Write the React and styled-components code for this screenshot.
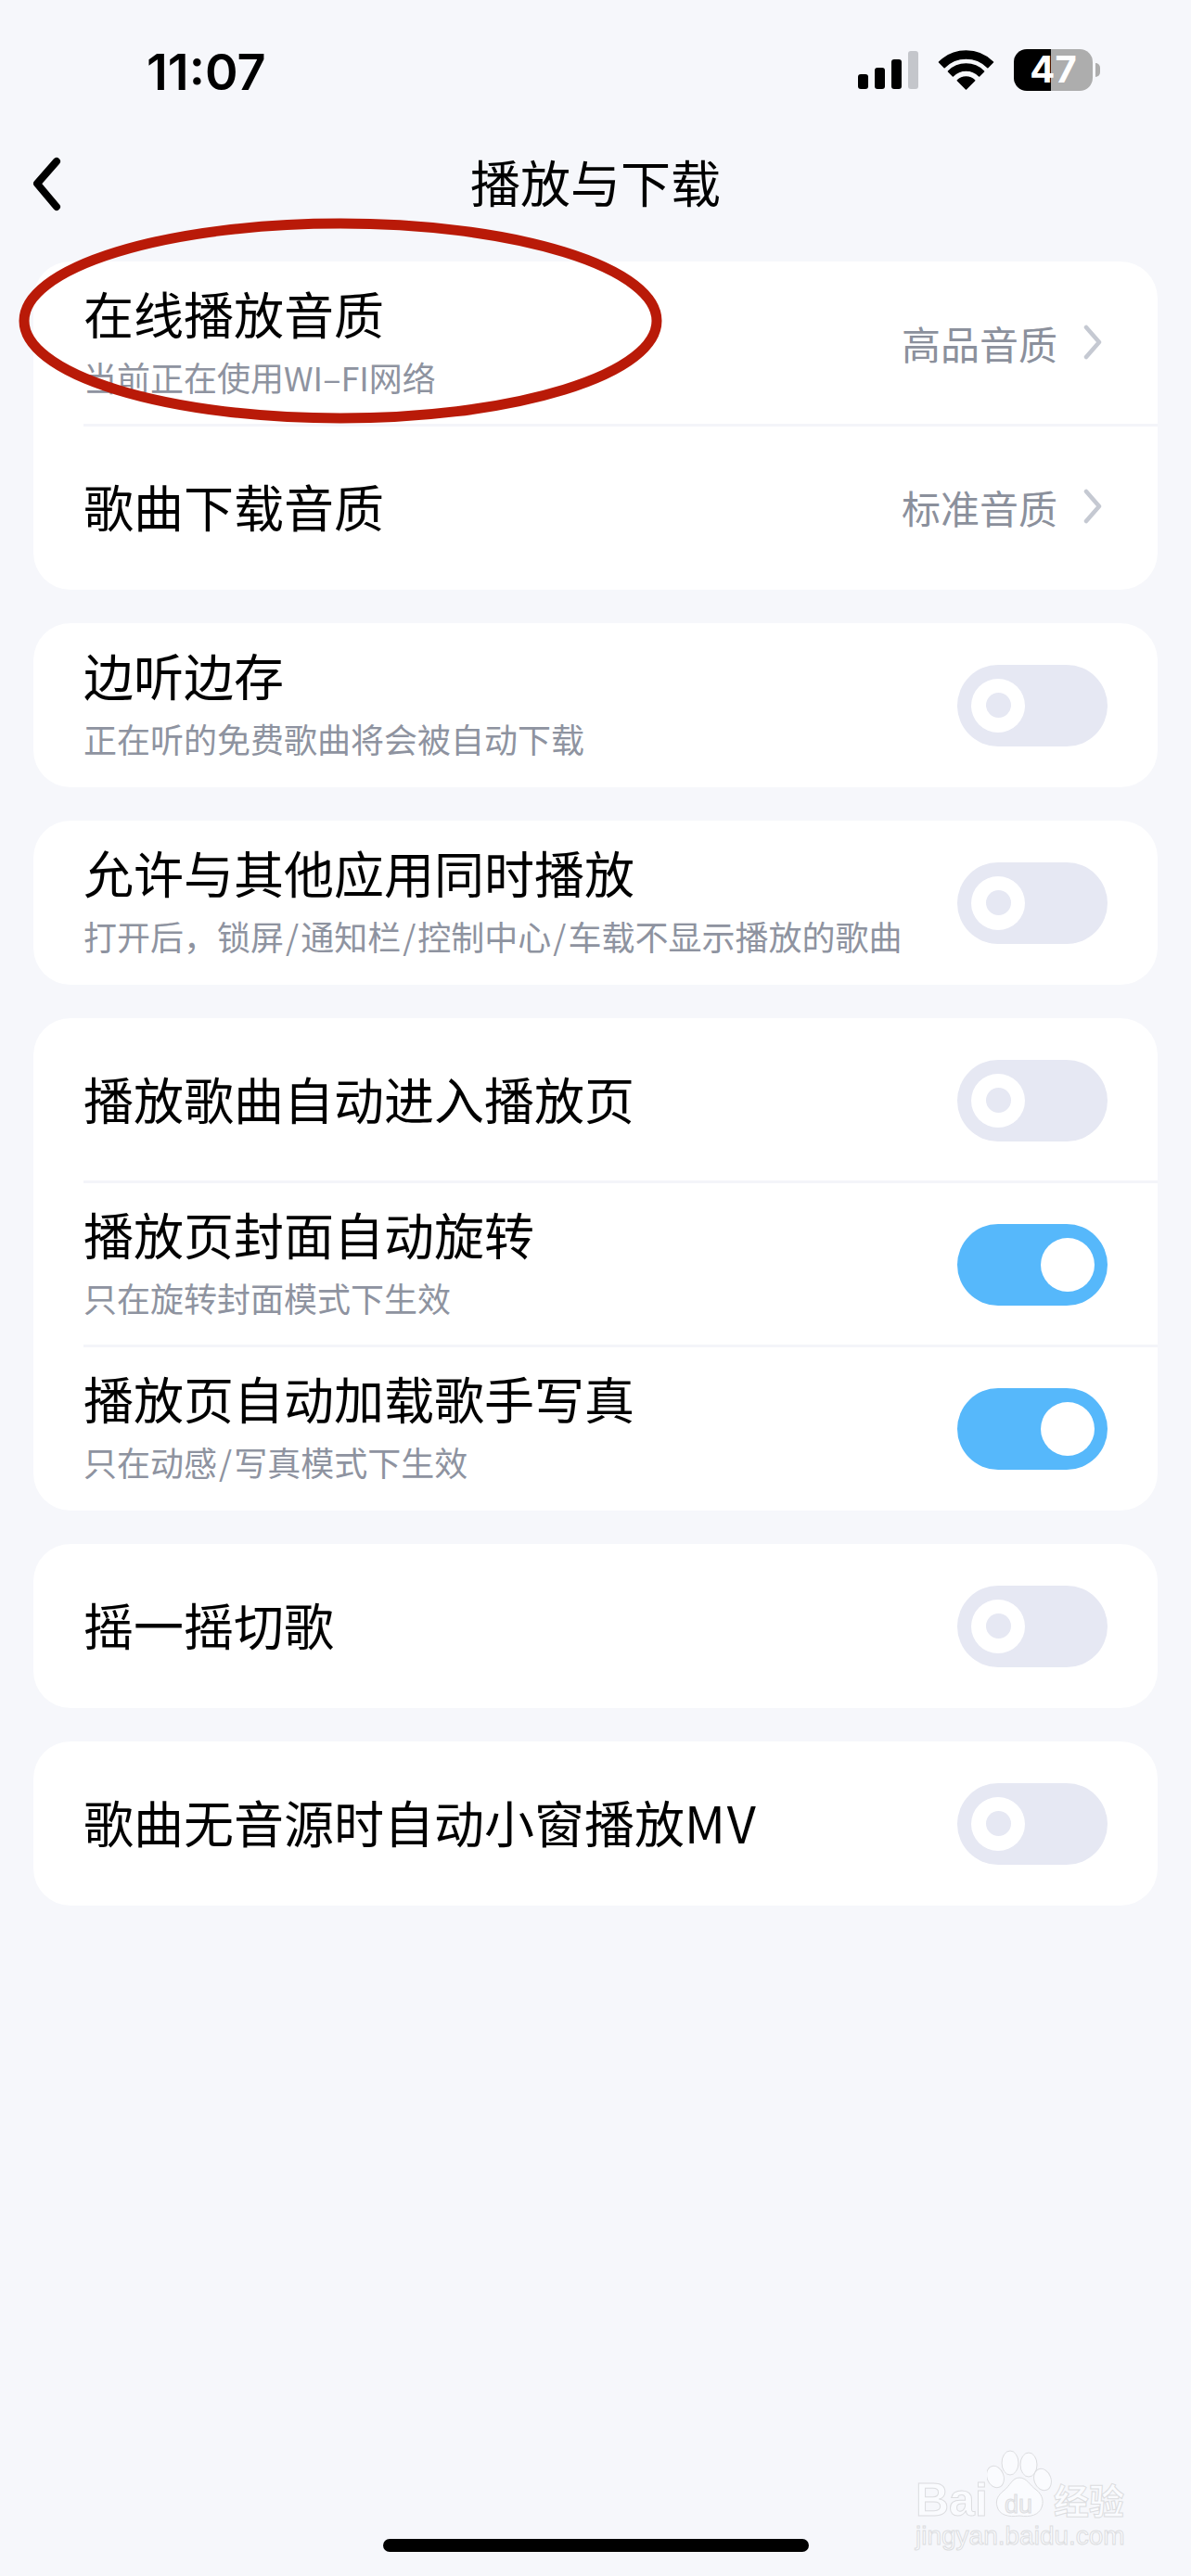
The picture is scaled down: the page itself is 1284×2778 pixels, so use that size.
import React from 'react'
import styled, { createGlobalStyle } from 'styled-components'

const GlobalStyle = createGlobalStyle`
  html, body {
    margin: 0;
    padding: 0;
    background: #f6f7fb;
  }
  body {
    font-family: "Noto Sans CJK SC", "Noto Sans", sans-serif;
  }
`

const Page = styled.div`
  position: relative;
  width: 1284px;
  height: 2778px;
  overflow: hidden;
  background: #f6f7fb;
`

const StatusBar = styled.div`
  display: flex;
  align-items: center;
  justify-content: space-between;
  height: 150px;
  padding: 0 106px 0 158px;
  box-sizing: border-box;
`

const Time = styled.span`
  font-family: Inter, sans-serif;
  font-weight: 600;
  font-size: 54px;
  margin-top: 4px;
  color: #000;
`

const StatusIcons = styled.div`
  display: flex;
  align-items: center;
  gap: 23px;
`

const Battery = styled.div`
  position: relative;
  display: flex;
  align-items: center;
  justify-content: center;
  width: 85px;
  height: 45px;
  border-radius: 14px;
  background: linear-gradient(to right, #000 47%, #adadad 47%);
  color: #fff;
  font-family: Inter, sans-serif;
  font-weight: 700;
  font-size: 40px;
  line-height: 1;
  &::after {
    content: '';
    position: absolute;
    left: 88px;
    top: 15px;
    width: 5px;
    height: 15px;
    border-radius: 0 8px 8px 0;
    background: #adadad;
  }
`

const Header = styled.header`
  position: relative;
  display: flex;
  align-items: center;
  justify-content: center;
  height: 94px;
  margin-bottom: 38px;
`

const BackIcon = styled.svg`
  position: absolute;
  left: 32px;
  top: 19px;
`

const Title = styled.h1`
  margin: -3px 0 0;
  font-size: 54px;
  font-weight: 400;
  color: #000;
`

const List = styled.main`
  display: flex;
  flex-direction: column;
  gap: 36px;
  padding: 0 36px;
`

const Card = styled.section`
  background: #fff;
  border-radius: 40px;
  overflow: hidden;
`

const Row = styled.div`
  position: relative;
  display: flex;
  align-items: center;
  justify-content: space-between;
  height: 177px;
  padding: 0 54px;
  box-sizing: border-box;
  &:not(:last-child)::after {
    content: '';
    position: absolute;
    left: 54px;
    right: 0;
    bottom: -1px;
    height: 3px;
    background: #f4f5f9;
  }
`

const Texts = styled.div`
  display: flex;
  flex-direction: column;
  gap: 13px;
  margin-bottom: 4px;
`

const Label = styled.div`
  font-size: 54px;
  line-height: 66px;
  color: #000;
`

const Latin = styled.span`
  letter-spacing: 2px;
`

const Sub = styled.div`
  margin-bottom: 5px;
  font-size: 36px;
  line-height: 44px;
  color: #8e93a0;
`

const Slash = styled.span`
  margin: 0 2px;
`

const Value = styled.div`
  display: flex;
  align-items: center;
  gap: 28px;
  margin: 0 6px 3px 0;
  font-size: 42px;
  color: #8b909c;
`

const Track = styled.div`
  position: relative;
  width: 162px;
  height: 88px;
  border-radius: 44px;
  background: ${(p) => (p.$on ? '#56b8fb' : '#e6e8f3')};
`

const Knob = styled.div`
  position: absolute;
  top: 15px;
  left: ${(p) => (p.$on ? '90px' : '15px')};
  width: 58px;
  height: 58px;
  border-radius: 50%;
  background: #fff;
  display: flex;
  align-items: center;
  justify-content: center;
  &::after {
    content: '';
    display: ${(p) => (p.$on ? 'none' : 'block')};
    width: 27px;
    height: 27px;
    border-radius: 50%;
    background: #e6e8f3;
  }
`

const Circle = styled.svg`
  position: absolute;
  left: 20px;
  top: 234px;
`

const HomeBar = styled.div`
  position: absolute;
  left: 413px;
  bottom: 26px;
  width: 459px;
  height: 14px;
  border-radius: 7px;
  background: #000;
`

const Watermark = styled.div`
  position: absolute;
  left: 987px;
  top: 2642px;
  width: 240px;
  color: #fafbfe;
  -webkit-text-stroke: 1px #dcdde0;
`

const Brand = styled.div`
  display: flex;
  align-items: flex-end;
  height: 74px;
  white-space: nowrap;
`

const BrandLatin = styled.span`
  flex: none;
  width: 77px;
  font-family: "Liberation Sans", sans-serif;
  font-weight: 700;
  font-size: 50px;
  line-height: 40px;
`

const BrandCjk = styled.span`
  flex: none;
  margin-left: 2px;
  font-family: "Noto Sans CJK SC", sans-serif;
  font-weight: 700;
  font-size: 38px;
  line-height: 42px;
`

const Paw = styled.div`
  position: relative;
  flex: none;
  width: 70px;
  height: 74px;
`

const PawText = styled.span`
  position: absolute;
  left: 19px;
  bottom: 0;
  font-family: "Liberation Sans", sans-serif;
  font-size: 27px;
  line-height: 30px;
  color: #f0f1f5;
`

const Site = styled.div`
  margin-top: 2px;
  font-family: "Liberation Sans", sans-serif;
  font-size: 28px;
  line-height: 34px;
  white-space: nowrap;
`

const band = (rO, rI) => {
  const s = Math.SQRT1_2
  const cx = 28.5
  const cy = 42
  if (!rI) return `M${cx - rO * s} ${cy - rO * s}A${rO} ${rO} 0 0 1 ${cx + rO * s} ${cy - rO * s}L${cx} ${cy}Z`
  return `M${cx - rO * s} ${cy - rO * s}A${rO} ${rO} 0 0 1 ${cx + rO * s} ${cy - rO * s}L${cx + rI * s} ${cy - rI * s}A${rI} ${rI} 0 0 0 ${cx - rI * s} ${cy - rI * s}Z`
}

function Signal() {
  return (
    <svg width="65" height="41" viewBox="0 0 65 41">
      <rect x="0" y="25" width="11" height="16" rx="3" fill="#000" />
      <rect x="18" y="18" width="11" height="23" rx="3" fill="#000" />
      <rect x="36" y="9" width="11" height="32" rx="3" fill="#000" />
      <rect x="54" y="0" width="11" height="41" rx="3" fill="#c4c6cb" />
    </svg>
  )
}

function Wifi() {
  return (
    <svg width="57" height="42" viewBox="0 0 57 42" style={{ overflow: 'visible' }}>
      <g fill="#000" stroke="#000" strokeWidth="1.5" strokeLinejoin="round">
        <path d={band(41, 33)} />
        <path d={band(27, 20)} />
        <path d={band(13)} />
      </g>
    </svg>
  )
}

function Toggle({ on }) {
  return (
    <Track $on={on}>
      <Knob $on={on} />
    </Track>
  )
}

function Item({ label, sub, value, on }) {
  return (
    <Row>
      <Texts>
        <Label>{label}</Label>
        {sub && <Sub>{sub}</Sub>}
      </Texts>
      {value ? (
        <Value>
          {value}
          <svg width="20" height="38" viewBox="0 0 20 38">
            <path d="M3 3l14 16L3 35" fill="none" stroke="#c5c9d2" strokeWidth="4.5" strokeLinecap="round" strokeLinejoin="round" />
          </svg>
        </Value>
      ) : (
        <Toggle on={on} />
      )}
    </Row>
  )
}

export default function App() {
  return (
    <Page>
      <GlobalStyle />
      <StatusBar>
        <Time>11:07</Time>
        <StatusIcons>
          <Signal />
          <Wifi />
          <Battery>47</Battery>
        </StatusIcons>
      </StatusBar>
      <Header>
        <BackIcon width="40" height="62" viewBox="0 0 40 62">
          <path d="M29 5L8 29l21 25" fill="none" stroke="#000" strokeWidth="8" strokeLinecap="round" strokeLinejoin="round" />
        </BackIcon>
        <Title>播放与下载</Title>
      </Header>
      <List>
        <Card>
          <Item label="在线播放音质" sub="当前正在使用WI–FI网络" value="高品音质" />
          <Item label="歌曲下载音质" value="标准音质" />
        </Card>
        <Card>
          <Item label="边听边存" sub="正在听的免费歌曲将会被自动下载" />
        </Card>
        <Card>
          <Item
            label="允许与其他应用同时播放"
            sub={
              <>
                打开后，锁屏<Slash>/</Slash>通知栏<Slash>/</Slash>控制中心<Slash>/</Slash>车载不显示播放的歌曲
              </>
            }
          />
        </Card>
        <Card>
          <Item label="播放歌曲自动进入播放页" />
          <Item label="播放页封面自动旋转" sub="只在旋转封面模式下生效" on />
          <Item
            label="播放页自动加载歌手写真"
            sub={
              <>
                只在动感<Slash>/</Slash>写真模式下生效
              </>
            }
            on
          />
        </Card>
        <Card>
          <Item label="摇一摇切歌" />
        </Card>
        <Card>
          <Item
            label={
              <>
                歌曲无音源时自动小窗播放<Latin>MV</Latin>
              </>
            }
          />
        </Card>
      </List>
      <Circle width="694" height="224" viewBox="0 0 694 224">
        <ellipse cx="347" cy="112" rx="341" ry="105" fill="none" stroke="#b91a08" strokeWidth="11" />
      </Circle>
      <HomeBar />
      <Watermark>
        <Brand>
          <BrandLatin>Bai</BrandLatin>
          <Paw>
            <svg width="70" height="74" viewBox="0 0 70 74">
              <g fill="#fafbfe" stroke="#dcdde0" strokeWidth="1">
                <ellipse cx="25" cy="14" rx="9" ry="13" />
                <ellipse cx="45" cy="16" rx="9" ry="13" />
                <ellipse cx="9" cy="29" rx="9" ry="12" transform="rotate(-20 9 29)" />
                <ellipse cx="60" cy="32" rx="9" ry="12" transform="rotate(-20 60 32)" />
                <path d="M35 30c8 0 11 8 18 13 8 6 8 14 6 19-3 8-12 11-24 9-12 2-22-1-24-10-2-7 1-12 7-17 7-5 9-14 17-14z" />
              </g>
            </svg>
            <PawText>du</PawText>
          </Paw>
          <BrandCjk>经验</BrandCjk>
        </Brand>
        <Site>jingyan.baidu.com</Site>
      </Watermark>
    </Page>
  )
}
